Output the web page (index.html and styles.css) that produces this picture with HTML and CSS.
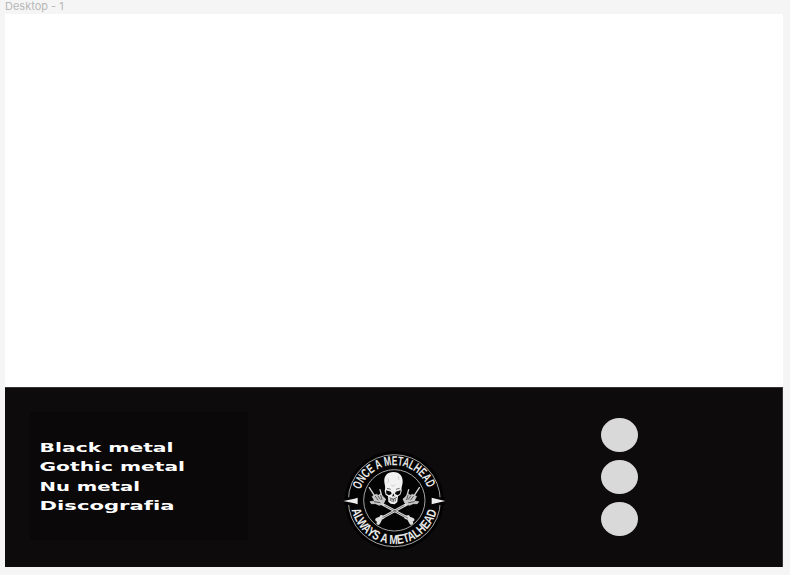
FILE: index.html
```html
<!DOCTYPE html>
<html lang="es">
<head>
<meta charset="utf-8">
<title>Desktop - 1</title>
<link rel="stylesheet" href="styles.css">
</head>
<body>
<div class="label">Desktop - 1</div>
<div class="frame">
  <main class="content"></main>
  <footer class="footer">
    <nav class="links">
      <svg width="200" height="80" viewBox="0 0 200 80">
        <text x="-0.500" y="12.500" textLength="134" lengthAdjust="spacingAndGlyphs">Black metal</text>
        <text x="-0.500" y="32" textLength="145.500" lengthAdjust="spacingAndGlyphs">Gothic metal</text>
        <text x="-0.500" y="51.500" textLength="100.500" lengthAdjust="spacingAndGlyphs">Nu metal</text>
        <text x="-0.500" y="71" textLength="135" lengthAdjust="spacingAndGlyphs">Discografia</text>
      </svg>
    </nav>
    <svg class="logo" width="120" height="110" viewBox="0 0 360 330">
      <defs>
        <path id="top" d="M76.400 134A107 107 0 0 1 279.600 134"/>
        <path id="bottom" d="M50 194A131 131 0 0 0 305 198"/>
      </defs>
      <circle cx="178" cy="167" r="148" fill="#030303"/>
      <g fill="none" stroke="#b5b5b5" stroke-width="2.700">
        <circle cx="178" cy="167" r="138"/>
        <circle cx="178" cy="166" r="92"/>
      </g>
      <g class="motto">
        <text><textPath href="#top" textLength="263" lengthAdjust="spacingAndGlyphs">ONCE A METALHEAD</textPath></text>
        <text><textPath href="#bottom" textLength="350" lengthAdjust="spacingAndGlyphs">ALWAYS A METALHEAD</textPath></text>
      </g>
      <path fill="#030303" d="M28 157H70V180H28zM288 157H330V180H288z"/>
      <path fill="#eee" d="M25 168L58 161L68 158V178L58 175zM331 168L302 161L290 158V178L302 175z"/>
      <!-- crossed arms -->
      <g stroke="#dedede" stroke-linecap="round" fill="none">
        <path stroke-width="8" d="M139 176L228 224M217 177L131 224"/>
        <path stroke-width="11" d="M213 217L233 224M219 216L229 234M143 217L126 224M139 216L130 234"/>
        <path stroke="#111" stroke-width="1.500" d="M149 181L218 219M207 182L143 218"/>
      </g>
      <!-- horned hands -->
      <g id="hand" stroke="#d8d8d8" fill="none" stroke-linecap="round">
        <path stroke-width="4" d="M122 157L103 128M139 148L135 134"/>
        <path fill="#c8c8c8" stroke-width="2" d="M112 154L124 148L130 151L138 146L144 155L152 162L146 175L133 181L122 176L109 176L105 170L118 168z"/>
        <path stroke="#151515" stroke-width="2" d="M121 154L129 165M129 153L136 163M137 151L141 164M118 170L135 173"/>
      </g>
      <use href="#hand" transform="translate(356 0) scale(-1 1)"/>
      <!-- skull -->
      <path fill="#f2f2f2" d="M148 112C146 93 157 81 175 81C195 81 204 95 203 112C202 123 198 127 200 138L196 149L189 154L187 171L179 178L167 176L160 170L159 154L152 149L149 138C152 129 150 123 148 112z"/>
      <path fill="#090909" d="M153 136L168 140L170 147L162 151L154 146zM197 136L182 140L180 147L188 151L195 146zM175 145L171 155L175 153L179 156z"/>
      <path stroke="#222" stroke-width="2" fill="none" d="M163 158L175 162L186 157M166 161V168M171 162V171M176 162V172M181 161V169M156 130L167 133M194 130L183 133"/>
      <path stroke="#aaa" stroke-width="1.500" fill="none" d="M158 99L161 107L157 114M190 94L192 104M168 120L174 124L181 119"/>
    </svg>
    <div class="dots"><i></i><i></i><i></i></div>
  </footer>
</div>
</body>
</html>
```
FILE: styles.css
```css
body {
  margin: 0;
  height: 575px;
  overflow: hidden;
  background: #f5f5f5;
  font-family: Inter, sans-serif;
}
.label {
  height: 14px;
  padding-left: 5px;
  font-size: 11px;
  line-height: 13px;
  color: #b8b8b8;
}
.frame {
  width: 778px;
  height: 553px;
  margin-left: 5px;
  background: #fff;
}
.content {
  height: 373px;
}
.footer {
  display: flex;
  box-sizing: border-box;
  height: 180px;
  padding-left: 25px;
  border-top: 1px solid #353535;
  border-right: 1px solid #353535;
  background: #0d0b0c;
}
.links {
  box-sizing: border-box;
  width: 218px;
  height: 128px;
  margin-top: 24px;
  padding: 27px 0 0 10px;
  background: #0a0809;
}
.links text {
  font: bold 12px "DejaVu Sans", sans-serif;
  fill: #fff;
}
.logo {
  margin: 57px 0 0 87px;
}
.motto text {
  font: bold 39px "Liberation Sans", sans-serif;
  fill: #e8e8e8;
}
.dots {
  display: flex;
  flex-direction: column;
  gap: 8px;
  margin: 30px 0 0 146px;
}
.dots i {
  width: 37px;
  height: 34px;
  border-radius: 50%;
  background: #d9d9d9;
}
```
